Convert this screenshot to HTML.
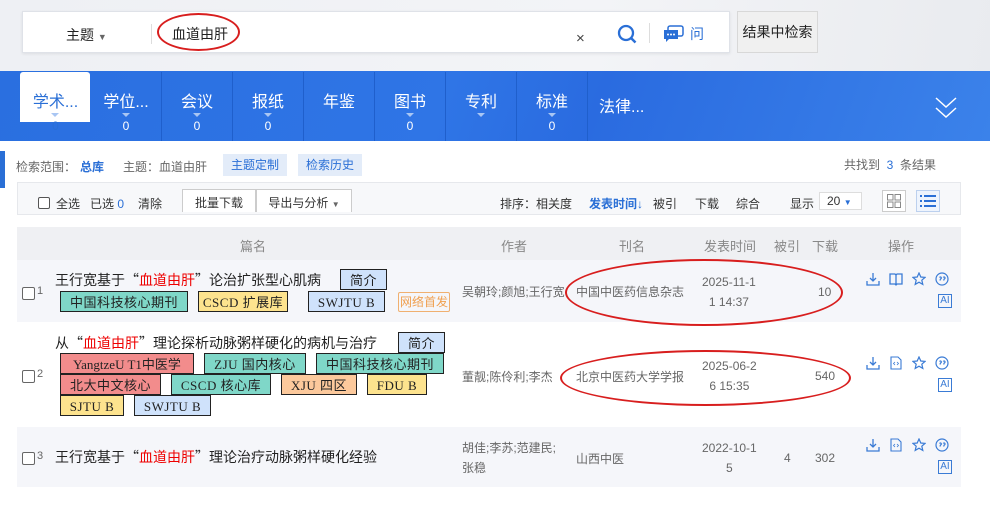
<!DOCTYPE html>
<html><head><meta charset="utf-8"><style>
*{margin:0;padding:0;box-sizing:border-box}
body{width:990px;height:531px;overflow:hidden;background:#fff;font-family:"Liberation Sans","Noto Sans CJK SC",sans-serif;font-size:13px;color:#333;position:relative}
.a{position:absolute;white-space:nowrap}
.q{font-family:"Noto Sans CJK SC",sans-serif}
.tab{position:absolute;top:72px;width:71px;height:69px;color:#fff;text-align:center;border-right:1px solid #1f5fcc}
.tab .t{font-size:16px;margin-top:21px;line-height:20px}
.tab .n{font-size:12px;line-height:14px;margin-top:6px;position:relative}
.tab .n:before{content:"";position:absolute;left:31px;top:-6px;border:4px solid transparent;border-top:4px solid #a9c6f3}
.tag{position:absolute;height:21px;border:1px solid #222;font-family:"Liberation Serif","Noto Sans CJK SC",serif;font-size:13px;letter-spacing:.5px;line-height:21px;text-align:center;color:#222;overflow:hidden}
.red{background:#f28c8c}.teal{background:#7fd7c8}.yel{background:#fde38e}.blu{background:#cfe2fb}.org{background:#fcc99c}
.g{color:#666}
</style></head><body>
<div class="a" style="left:0;top:0;width:990px;height:71px;background:linear-gradient(100deg,#eef0f4,#f3f4f7 60%,#e9ebef)"></div>
<div class="a" style="left:22px;top:11px;width:708px;height:42px;background:#fff;border:1px solid #dfe2e8;box-shadow:0 1px 3px rgba(0,0,0,.08)"></div>
<div class="a" style="left:66px;top:25px;font-size:14px;color:#222">主题 <span style="font-size:9px;color:#666">▼</span></div>
<div class="a" style="left:151px;top:24px;width:1px;height:20px;background:#ddd"></div>
<div class="a" style="left:172px;top:24px;font-size:14px;color:#222">血道由肝</div>
<div class="a" style="left:157px;top:13px;width:83px;height:38px;border:2px solid #d81e1e;border-radius:50%"></div>
<div class="a" style="left:576px;top:30px;font-size:15px;color:#444">×</div>
<svg class="a" style="left:616px;top:23px" width="22" height="22" viewBox="0 0 22 22"><circle cx="10" cy="10" r="7" fill="none" stroke="#2a6fd6" stroke-width="2.3"/><path d="M15 15l4.5 4.5" stroke="#2a6fd6" stroke-width="2.5"/></svg>
<div class="a" style="left:649px;top:23px;width:1px;height:20px;background:#ddd"></div>
<svg class="a" style="left:663px;top:25px" width="22" height="18" viewBox="0 0 22 18"><rect x="5" y="1" width="15" height="10" rx="2" fill="none" stroke="#2a6fd6" stroke-width="1.5"/><path d="M1 5h14v9H6l-3 3v-3H1z" fill="#2a6fd6"/><circle cx="5" cy="9.5" r="1" fill="#fff"/><circle cx="8" cy="9.5" r="1" fill="#fff"/><circle cx="11" cy="9.5" r="1" fill="#fff"/></svg>
<div class="a" style="left:690px;top:24px;font-size:14px;color:#2a6fd6">问</div>
<div class="a" style="left:737px;top:11px;width:81px;height:42px;background:#f0f0f0;border:1px solid #d8d8d8;font-size:14px;line-height:40px;text-align:center;color:#222">结果中检索</div>

<div class="a" style="left:0;top:71px;width:990px;height:70px;background:linear-gradient(110deg,#2a6fe0,#2f75e6 45%,#2a6be0 60%,#3b82ea)"></div>
<div class="a" style="left:20px;top:72px;width:70px;height:50px;background:#fff;border-radius:3px 3px 0 0"></div>
<div class="tab" style="left:20px;border:none"><div class="t" style="color:#2a6fd6">学术...</div><div class="n" style="color:#2a6fd6">0</div></div>
<div class="tab" style="left:91px"><div class="t">学位...</div><div class="n">0</div></div>
<div class="tab" style="left:162px"><div class="t">会议</div><div class="n">0</div></div>
<div class="tab" style="left:233px"><div class="t">报纸</div><div class="n" style="">0</div></div>
<div class="tab" style="left:304px"><div class="t">年鉴</div></div>
<div class="tab" style="left:375px"><div class="t">图书</div><div class="n">0</div></div>
<div class="tab" style="left:446px"><div class="t">专利</div><div class="n" style="color:transparent">0</div></div>
<div class="tab" style="left:517px"><div class="t">标准</div><div class="n">0</div></div>
<div class="a" style="left:599px;top:93px;color:#fff;font-size:16px">法律...</div>
<svg class="a" style="left:934px;top:96px" width="24" height="24" viewBox="0 0 24 24"><path d="M2 2l10 9 10-9M2 12l10 9 10-9" fill="none" stroke="#fff" stroke-width="1.5"/></svg>

<div class="a" style="left:0;top:151px;width:5px;height:37px;background:#2a6fd6"></div>
<div class="a g" style="left:16px;top:158px;font-size:12px">检索范围：</div>
<div class="a" style="left:80px;top:158px;font-size:12px;color:#2a6fd6;font-weight:bold">总库</div>
<div class="a g" style="left:123px;top:158px;font-size:12px">主题：血道由肝</div>
<div class="a" style="left:223px;top:154px;width:64px;height:22px;background:#e3ecf9;color:#2a6fd6;font-size:12px;line-height:22px;text-align:center">主题定制</div>
<div class="a" style="left:298px;top:154px;width:64px;height:22px;background:#e3ecf9;color:#2a6fd6;font-size:12px;line-height:22px;text-align:center">检索历史</div>
<div class="a g" style="left:844px;top:156px;font-size:12px">共找到 <span style="color:#2a6fd6">&nbsp;3&nbsp;</span> 条结果</div>

<div class="a" style="left:17px;top:182px;width:944px;height:33px;background:#f7f8fa;border:1px solid #e6e8ec"></div>
<div class="a" style="left:38px;top:197px;width:12px;height:12px;border:1px solid #555;border-radius:2px;background:#fff"></div>
<div class="a" style="left:56px;top:195px;font-size:12px">全选</div>
<div class="a" style="left:90px;top:195px;font-size:12px">已选 <span style="color:#2a6fd6">0</span></div>
<div class="a" style="left:138px;top:195px;font-size:12px">清除</div>
<div class="a" style="left:182px;top:189px;width:74px;height:23px;background:#fff;border:1px solid #ccc;border-bottom:none;font-size:12px;line-height:26px;text-align:center">批量下载</div>
<div class="a" style="left:256px;top:189px;width:96px;height:23px;background:#fff;border:1px solid #ccc;border-bottom:none;font-size:12px;line-height:26px;text-align:center">导出与分析 <span style="font-size:8px;color:#666">▼</span></div>
<div class="a" style="left:500px;top:195px;font-size:12px">排序：相关度</div>
<div class="a" style="left:589px;top:195px;font-size:12px;color:#2a6fd6;font-weight:bold">发表时间<span style="color:#2a6fd6">↓</span></div>
<div class="a" style="left:653px;top:195px;font-size:12px">被引</div>
<div class="a" style="left:695px;top:195px;font-size:12px">下载</div>
<div class="a" style="left:736px;top:195px;font-size:12px">综合</div>
<div class="a" style="left:790px;top:195px;font-size:12px">显示</div>
<div class="a" style="left:819px;top:192px;width:43px;height:18px;background:#fff;border:1px solid #ddd;font-size:12px;line-height:16px;padding-left:7px">20 <span style="font-size:8px;color:#2a6fd6">▼</span></div>
<div class="a" style="left:882px;top:190px;width:24px;height:22px;border:1px solid #ccc;background:#fff"></div>
<svg class="a" style="left:887px;top:194px" width="14" height="14"><rect x=".5" y=".5" width="5.5" height="5.5" fill="none" stroke="#888"/><rect x="8" y=".5" width="5.5" height="5.5" fill="none" stroke="#888"/><rect x=".5" y="8" width="5.5" height="5.5" fill="none" stroke="#888"/><rect x="8" y="8" width="5.5" height="5.5" fill="none" stroke="#888"/></svg>
<div class="a" style="left:916px;top:190px;width:24px;height:22px;border:1px solid #bcd0ee;background:#eef4fd"></div>
<svg class="a" style="left:920px;top:195px" width="16" height="13"><g fill="#2a6fd6"><rect x="0" y="0" width="2" height="2"/><rect x="4" y="0" width="12" height="2"/><rect x="0" y="5" width="2" height="2"/><rect x="4" y="5" width="12" height="2"/><rect x="0" y="10" width="2" height="2"/><rect x="4" y="10" width="12" height="2"/></g></svg>

<div class="a" style="left:17px;top:227px;width:944px;height:33px;background:#eff0f3"></div>
<div class="a" style="left:240px;top:236px;color:#888">篇名</div>
<div class="a" style="left:501px;top:236px;color:#888">作者</div>
<div class="a" style="left:619px;top:236px;color:#888">刊名</div>
<div class="a" style="left:704px;top:236px;color:#888">发表时间</div>
<div class="a" style="left:774px;top:236px;color:#888">被引</div>
<div class="a" style="left:812px;top:236px;color:#888">下载</div>
<div class="a" style="left:888px;top:236px;color:#888">操作</div>

<div class="a" style="left:17px;top:260px;width:944px;height:62px;background:#f5f6fa"></div>
<div class="a" style="left:17px;top:427px;width:944px;height:60px;background:#f5f6fa"></div>

<!-- row1 -->
<div class="a" style="left:22px;top:287px;width:13px;height:13px;border:1px solid #666;border-radius:2px;background:#fff"></div>
<div class="a" style="left:37px;top:285px;font-size:11px;color:#666">1</div>
<div class="a" style="left:55px;top:270px;font-size:14px;color:#222">王行宽基于<span class="q">“</span><span style="color:#e00">血道由肝</span><span class="q">”</span>论治扩张型心肌病</div>
<div class="tag blu" style="left:340px;top:269px;width:47px;font-family:'Liberation Sans','Noto Sans CJK SC',sans-serif">简介</div>
<div class="tag teal" style="left:60px;top:291px;width:128px">中国科技核心期刊</div>
<div class="tag yel" style="left:198px;top:291px;width:90px">CSCD 扩展库</div>
<div class="tag blu" style="left:308px;top:291px;width:77px">SWJTU B</div>
<div class="a" style="left:398px;top:292px;width:52px;height:20px;border:1px solid #f0b070;border-radius:2px;color:#f0a050;font-size:12px;line-height:18px;text-align:center">网络首发</div>
<div class="a g" style="left:462px;top:283px;font-size:12px;width:103px;overflow:hidden">吴朝玲;颜旭;王行宽</div>
<div class="a g" style="left:576px;top:283px;font-size:12px">中国中医药信息杂志</div>
<div class="a g" style="left:702px;top:272px;font-size:12px;line-height:20px;text-align:center">2025-11-1<br>1 14:37</div>
<div class="a g" style="left:818px;top:285px;font-size:12px">10</div>
<div class="a" style="left:565px;top:259px;width:278px;height:67px;border:2.5px solid #d81e1e;border-radius:50%"></div>

<!-- row2 -->
<div class="a" style="left:22px;top:370px;width:13px;height:13px;border:1px solid #666;border-radius:2px;background:#fff"></div>
<div class="a" style="left:37px;top:368px;font-size:11px;color:#666">2</div>
<div class="a" style="left:55px;top:333px;font-size:14px;color:#222">从<span class="q">“</span><span style="color:#e00">血道由肝</span><span class="q">”</span>理论探析动脉粥样硬化的病机与治疗</div>
<div class="tag blu" style="left:398px;top:332px;width:47px;font-family:'Liberation Sans','Noto Sans CJK SC',sans-serif">简介</div>
<div class="tag red" style="left:60px;top:353px;width:134px;letter-spacing:0">YangtzeU T1中医学</div>
<div class="tag teal" style="left:204px;top:353px;width:102px">ZJU 国内核心</div>
<div class="tag teal" style="left:316px;top:353px;width:128px">中国科技核心期刊</div>
<div class="tag red" style="left:60px;top:374px;width:101px">北大中文核心</div>
<div class="tag teal" style="left:171px;top:374px;width:100px">CSCD 核心库</div>
<div class="tag org" style="left:281px;top:374px;width:76px">XJU 四区</div>
<div class="tag yel" style="left:367px;top:374px;width:60px">FDU B</div>
<div class="tag yel" style="left:60px;top:395px;width:64px">SJTU B</div>
<div class="tag blu" style="left:134px;top:395px;width:77px">SWJTU B</div>
<div class="a g" style="left:462px;top:368px;font-size:12px">董靓;陈伶利;李杰</div>
<div class="a g" style="left:576px;top:368px;font-size:12px">北京中医药大学学报</div>
<div class="a g" style="left:702px;top:356px;font-size:12px;line-height:20px;text-align:center">2025-06-2<br>6 15:35</div>
<div class="a g" style="left:815px;top:369px;font-size:12px">540</div>
<div class="a" style="left:560px;top:350px;width:291px;height:56px;border:2.5px solid #d81e1e;border-radius:50%"></div>

<!-- row3 -->
<div class="a" style="left:22px;top:452px;width:13px;height:13px;border:1px solid #666;border-radius:2px;background:#fff"></div>
<div class="a" style="left:37px;top:450px;font-size:11px;color:#666">3</div>
<div class="a" style="left:55px;top:447px;font-size:14px;color:#222">王行宽基于<span class="q">“</span><span style="color:#e00">血道由肝</span><span class="q">”</span>理论治疗动脉粥样硬化经验</div>
<div class="a g" style="left:462px;top:438px;font-size:12px;line-height:20px">胡佳;李苏;范建民;<br>张稳</div>
<div class="a g" style="left:576px;top:450px;font-size:12px">山西中医</div>
<div class="a g" style="left:702px;top:438px;font-size:12px;line-height:20px;text-align:center">2022-10-1<br>5</div>
<div class="a g" style="left:784px;top:451px;font-size:12px">4</div>
<div class="a g" style="left:815px;top:451px;font-size:12px">302</div>

<!-- icons -->
<svg width="0" height="0" style="position:absolute"><defs>
<g id="dl"><path d="M7 1v8M4 6l3 3 3-3M1 9v4h12V9" fill="none" stroke="#3a7bd5" stroke-width="1.3"/></g>
<g id="bk"><path d="M1 2h5l1 1 1-1h5v10H8l-1 1-1-1H1zM7 3v9" fill="none" stroke="#3a7bd5" stroke-width="1.3"/></g>
<g id="hm"><path d="M2 1h7l3 3v9H2z" fill="none" stroke="#3a7bd5" stroke-width="1.1"/><path d="M6 6l-1.5 1.5L6 9M8 6l1.5 1.5L8 9" fill="none" stroke="#3a7bd5" stroke-width=".8"/></g>
<g id="st"><path d="M7 1l1.8 4 4.2.4-3.2 2.8 1 4.2L7 10.2 3.2 12.4l1-4.2L1 5.4l4.2-.4z" fill="none" stroke="#3a7bd5" stroke-width="1.2"/></g>
<g id="qt"><circle cx="7" cy="7" r="6" fill="none" stroke="#3a7bd5" stroke-width="1.2"/><path d="M4.5 5.5a1 1 0 1 1 1 1.5l-.6 1.5M8.2 5.5a1 1 0 1 1 1 1.5l-.6 1.5" fill="none" stroke="#3a7bd5" stroke-width="1.2"/></g>
</defs></svg>
<svg class="a" style="left:866px;top:272px" width="14" height="14"><use href="#dl"/></svg>
<svg class="a" style="left:889px;top:272px" width="14" height="14"><use href="#bk"/></svg>
<svg class="a" style="left:912px;top:272px" width="14" height="14"><use href="#st"/></svg>
<svg class="a" style="left:935px;top:272px" width="14" height="14"><use href="#qt"/></svg>
<div class="a" style="left:938px;top:294px;width:14px;height:14px;border:1px solid #3a7bd5;color:#3a7bd5;font-size:10px;line-height:12px;text-align:center">AI</div>
<svg class="a" style="left:866px;top:356px" width="14" height="14"><use href="#dl"/></svg>
<svg class="a" style="left:889px;top:356px" width="14" height="14"><use href="#hm"/></svg>
<svg class="a" style="left:912px;top:356px" width="14" height="14"><use href="#st"/></svg>
<svg class="a" style="left:935px;top:356px" width="14" height="14"><use href="#qt"/></svg>
<div class="a" style="left:938px;top:378px;width:14px;height:14px;border:1px solid #3a7bd5;color:#3a7bd5;font-size:10px;line-height:12px;text-align:center">AI</div>
<svg class="a" style="left:866px;top:438px" width="14" height="14"><use href="#dl"/></svg>
<svg class="a" style="left:889px;top:438px" width="14" height="14"><use href="#hm"/></svg>
<svg class="a" style="left:912px;top:438px" width="14" height="14"><use href="#st"/></svg>
<svg class="a" style="left:935px;top:438px" width="14" height="14"><use href="#qt"/></svg>
<div class="a" style="left:938px;top:460px;width:14px;height:14px;border:1px solid #3a7bd5;color:#3a7bd5;font-size:10px;line-height:12px;text-align:center">AI</div>
</body></html>
